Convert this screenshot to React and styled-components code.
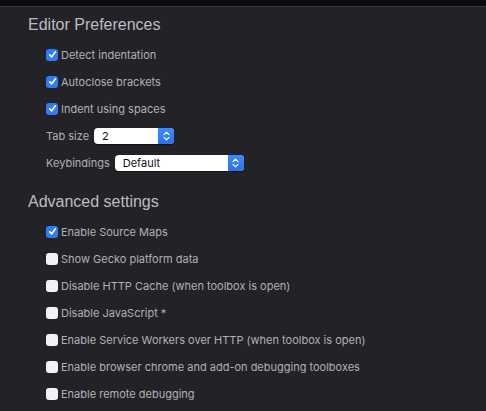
import React from "react";
import styled, { createGlobalStyle } from "styled-components";

const GlobalStyle = createGlobalStyle`
  html, body {
    margin: 0;
    padding: 0;
    background: #232327;
  }
  body {
    font-family: Inter, "Liberation Sans", Arial, sans-serif;
    -webkit-font-smoothing: antialiased;
  }
`;

const editorPrefs = [
  { label: "Detect indentation", checked: true },
  { label: "Autoclose brackets", checked: true },
  { label: "Indent using spaces", checked: true },
];

const advanced = [
  { label: "Enable Source Maps", checked: true },
  { label: "Show Gecko platform data", checked: false },
  { label: "Disable HTTP Cache (when toolbox is open)", checked: false },
  { label: "Disable JavaScript *", checked: false },
  { label: "Enable Service Workers over HTTP (when toolbox is open)", checked: false },
  { label: "Enable browser chrome and add-on debugging toolboxes", checked: false },
  { label: "Enable remote debugging", checked: false },
];

function Checkbox({ checked }) {
  return (
    <Box checked={checked}>
      {checked && (
        <svg width="9" height="9" viewBox="0 0 9 9">
          <path
            d="M1.6 4.8 L3.6 6.9 L7.4 1.8"
            fill="none"
            stroke="#fff"
            strokeWidth="1.6"
            strokeLinecap="round"
            strokeLinejoin="round"
          />
        </svg>
      )}
    </Box>
  );
}

function Select({ value, width }) {
  return (
    <SelectBox width={width}>
      <span className="value">{value}</span>
      <span className="arrows">
        <svg width="7" height="10" viewBox="0 0 7 10">
          <path
            d="M1 3.6 L3.5 1.2 L6 3.6 M1 6.4 L3.5 8.8 L6 6.4"
            fill="none"
            stroke="#fff"
            strokeWidth="1.2"
            strokeLinecap="round"
            strokeLinejoin="round"
          />
        </svg>
      </span>
    </SelectBox>
  );
}

export default function App() {
  return (
    <Page>
      <GlobalStyle />
      <TopBar />
      <Content>
        <Group>
          <Heading>Editor Preferences</Heading>
          <List>
            {editorPrefs.map(({ label, checked }) => (
              <Row key={label}>
                <Checkbox checked={checked} />
                <span>{label}</span>
              </Row>
            ))}
            <Row>
              <Label>Tab size</Label>
              <Select value="2" width={80} />
            </Row>
            <Row>
              <Label>Keybindings</Label>
              <Select value="Default" width={129} />
            </Row>
          </List>
        </Group>
        <Group spaced>
          <Heading>Advanced settings</Heading>
          <List>
            {advanced.map(({ label, checked }) => (
              <Row key={label}>
                <Checkbox checked={checked} />
                <span>{label}</span>
              </Row>
            ))}
          </List>
        </Group>
      </Content>
    </Page>
  );
}

const Page = styled.div`
  min-height: 411px;
  background: #232327;
  color: #b1b1b3;
`;

const TopBar = styled.div`
  height: 6px;
  background: #0c0c0d;
  border-bottom: 1px solid #3d3d41;
`;

const Content = styled.div`
  padding: 8px 0 0 28px;
`;

const Group = styled.section`
  margin-top: ${(p) => (p.spaced ? "16px" : "0")};
`;

const Heading = styled.h2`
  margin: 0 0 6px;
  font-family: "Liberation Sans", Arial, sans-serif;
  font-size: 16px;
  line-height: 20px;
  font-weight: normal;
  color: #bdbdc0;
`;

const List = styled.div`
  display: flex;
  flex-direction: column;
  padding-left: 18px;
`;

const Row = styled.div`
  display: flex;
  align-items: center;
  gap: 3px;
  height: 27px;
  font-size: 11px;
  color: #b1b1b3;
`;

const Label = styled.span`
  margin-right: 2px;
`;

const Box = styled.span`
  display: inline-flex;
  align-items: center;
  justify-content: center;
  box-sizing: border-box;
  width: 12px;
  height: 12px;
  border-radius: 3px;
  background: ${(p) => (p.checked ? "#2f7cf6" : "#f2f2f2")};
`;

const SelectBox = styled.div`
  display: flex;
  align-items: stretch;
  width: ${(p) => p.width}px;
  height: 16px;
  border-radius: 4px;
  overflow: hidden;
  background: #fff;
  box-shadow: 0 0.5px 1px rgba(0, 0, 0, 0.5);
  font-size: 11px;
  color: #111;

  .value {
    flex: 1;
    display: flex;
    align-items: center;
    padding-left: 8px;
  }
  .arrows {
    width: 16px;
    display: flex;
    align-items: center;
    justify-content: center;
    background: linear-gradient(#3d8bf8, #2a72f0);
  }
`;
